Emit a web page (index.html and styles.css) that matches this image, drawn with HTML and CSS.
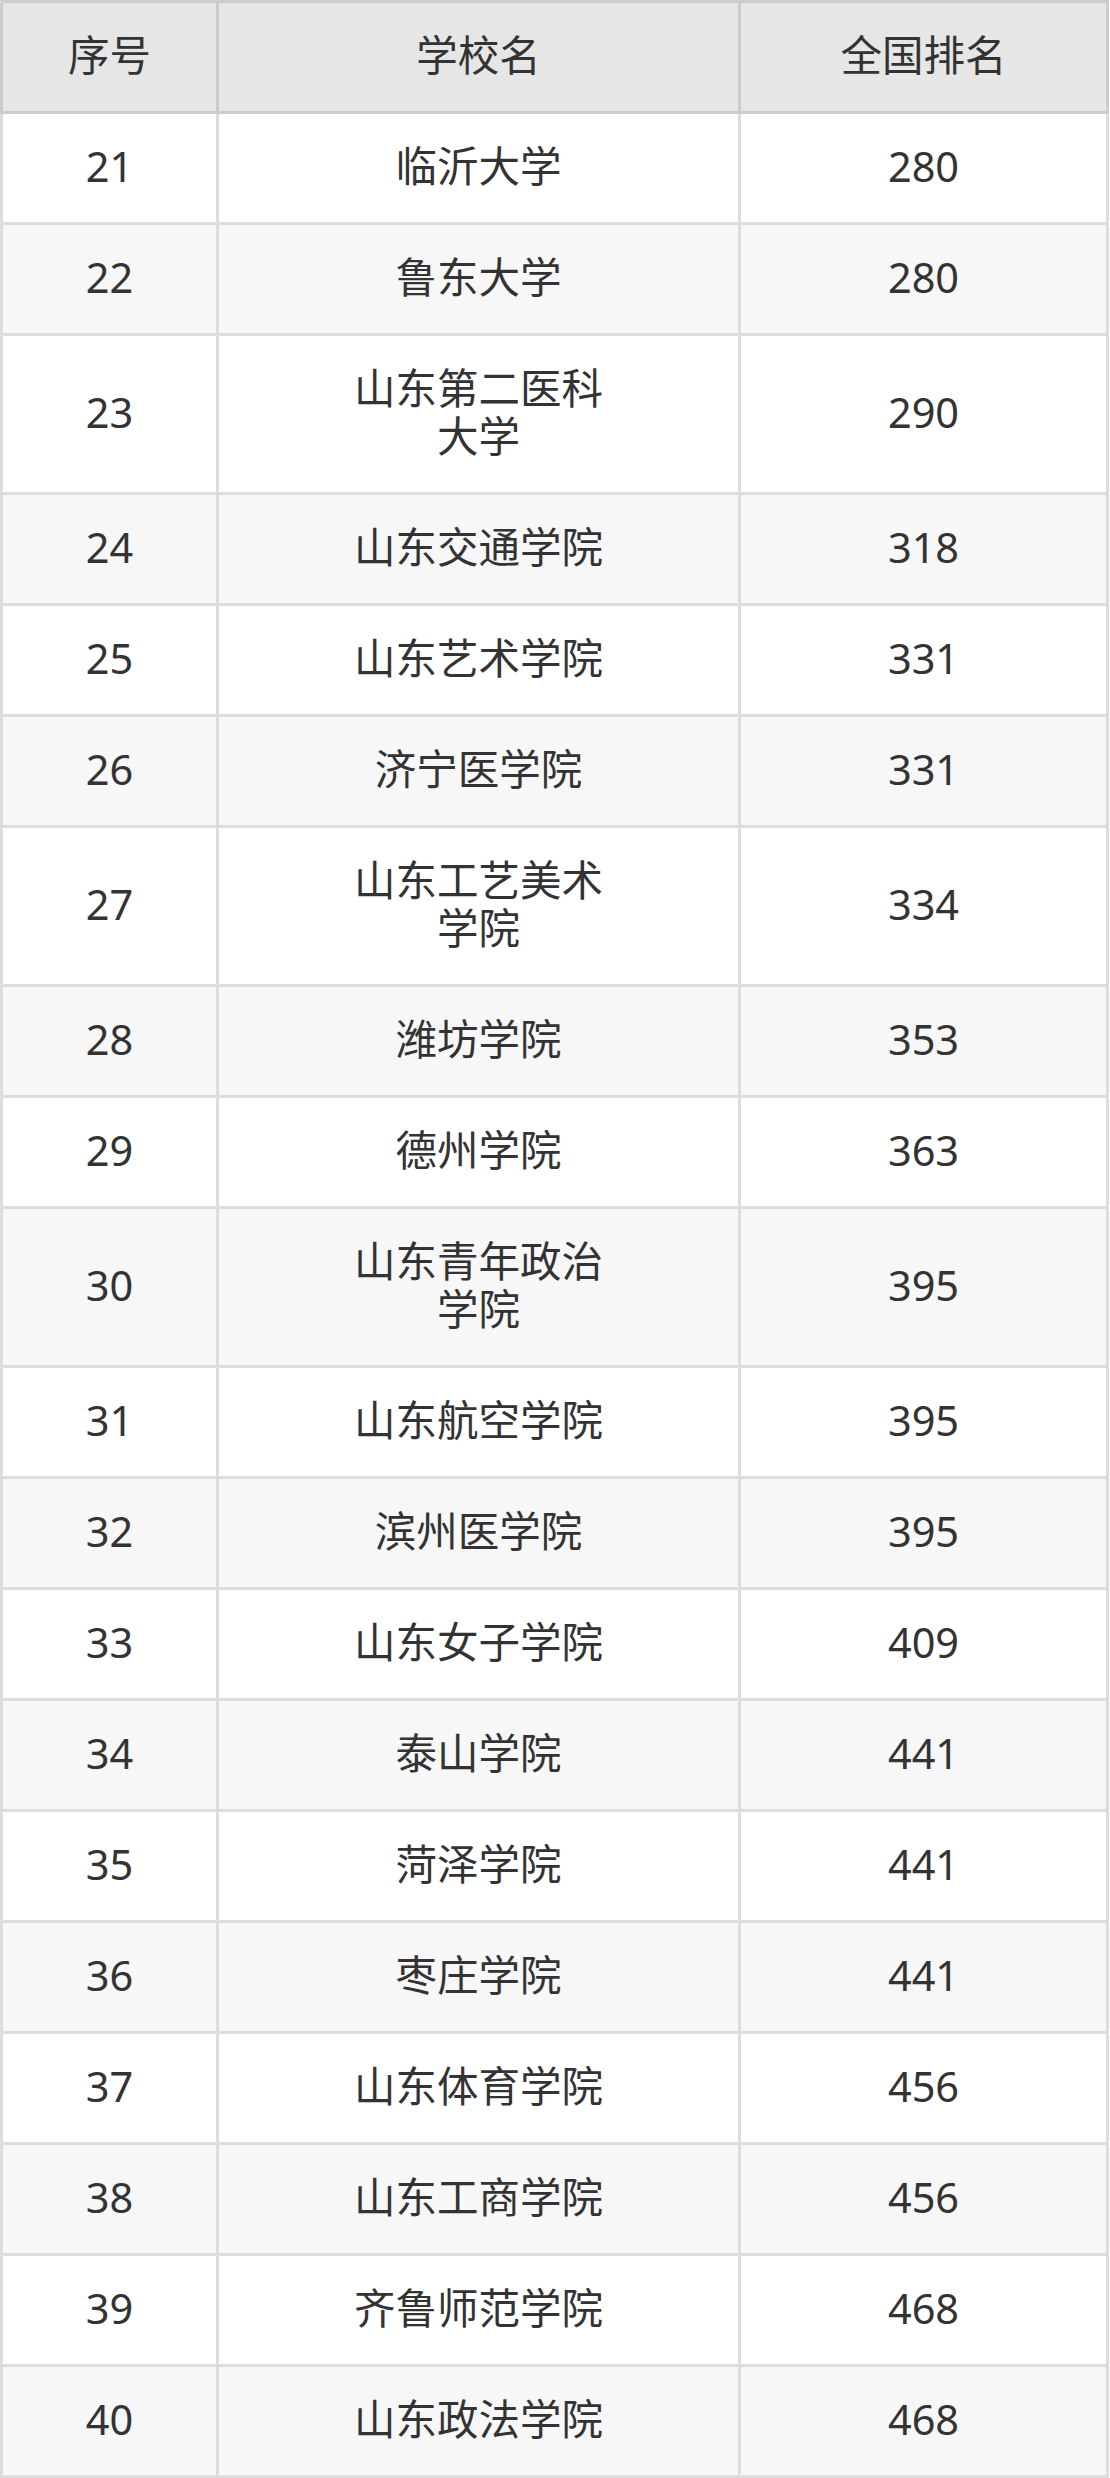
FILE: index.html
```html
<!DOCTYPE html>
<html lang="zh-CN">
<head>
<meta charset="utf-8">
<title>学校排名</title>
<link rel="stylesheet" href="styles.css">
</head>
<body>
<table class="rank-table">
  <colgroup>
    <col class="col-no">
    <col class="col-name">
    <col class="col-rank">
  </colgroup>
  <thead>
    <tr><th>序号</th><th>学校名</th><th>全国排名</th></tr>
  </thead>
  <tbody>
    <tr><td>21</td><td><span class="name">临沂大学</span></td><td>280</td></tr>
    <tr><td>22</td><td><span class="name">鲁东大学</span></td><td>280</td></tr>
    <tr><td>23</td><td><span class="name">山东第二医科大学</span></td><td>290</td></tr>
    <tr><td>24</td><td><span class="name">山东交通学院</span></td><td>318</td></tr>
    <tr><td>25</td><td><span class="name">山东艺术学院</span></td><td>331</td></tr>
    <tr><td>26</td><td><span class="name">济宁医学院</span></td><td>331</td></tr>
    <tr><td>27</td><td><span class="name">山东工艺美术学院</span></td><td>334</td></tr>
    <tr><td>28</td><td><span class="name">潍坊学院</span></td><td>353</td></tr>
    <tr><td>29</td><td><span class="name">德州学院</span></td><td>363</td></tr>
    <tr><td>30</td><td><span class="name">山东青年政治学院</span></td><td>395</td></tr>
    <tr><td>31</td><td><span class="name">山东航空学院</span></td><td>395</td></tr>
    <tr><td>32</td><td><span class="name">滨州医学院</span></td><td>395</td></tr>
    <tr><td>33</td><td><span class="name">山东女子学院</span></td><td>409</td></tr>
    <tr><td>34</td><td><span class="name">泰山学院</span></td><td>441</td></tr>
    <tr><td>35</td><td><span class="name">菏泽学院</span></td><td>441</td></tr>
    <tr><td>36</td><td><span class="name">枣庄学院</span></td><td>441</td></tr>
    <tr><td>37</td><td><span class="name">山东体育学院</span></td><td>456</td></tr>
    <tr><td>38</td><td><span class="name">山东工商学院</span></td><td>456</td></tr>
    <tr><td>39</td><td><span class="name">齐鲁师范学院</span></td><td>468</td></tr>
    <tr><td>40</td><td><span class="name">山东政法学院</span></td><td>468</td></tr>
  </tbody>
</table>
</body>
</html>
```
FILE: styles.css
```css
html, body {
  margin: 0;
  padding: 0;
  background: #ffffff;
}

body {
  font-family: "Noto Sans", "Noto Sans CJK SC", sans-serif;
  color: #333333;
}

.rank-table {
  width: 1109px;
  table-layout: fixed;
  border-collapse: separate;
  border-spacing: 0;
  border-top: 3px solid #cccccc;
  border-left: 3px solid #dddddd;
}

.col-no { width: 216px; }
.col-name { width: 522px; }
.col-rank { width: 368px; }

.rank-table th,
.rank-table td {
  box-sizing: border-box;
  padding: 28px 10px 32px;
  font-size: 41.5px;
  line-height: 48px;
  font-weight: normal;
  text-align: center;
  vertical-align: middle;
  border-right: 3px solid #dddddd;
  border-bottom: 3px solid #dddddd;
}

.rank-table th {
  background: #e6e6e6;
  color: #333333;
  border-right-color: #cccccc;
  border-bottom-color: #cccccc;
}

.rank-table thead th:first-child {
  box-shadow: -3px 0 0 #cccccc;
}

.rank-table tbody tr:nth-child(odd) td {
  background: #ffffff;
}

.rank-table tbody tr:nth-child(even) td {
  background: #f7f7f7;
}

.name {
  display: inline-block;
  max-width: 270px;
}
```
